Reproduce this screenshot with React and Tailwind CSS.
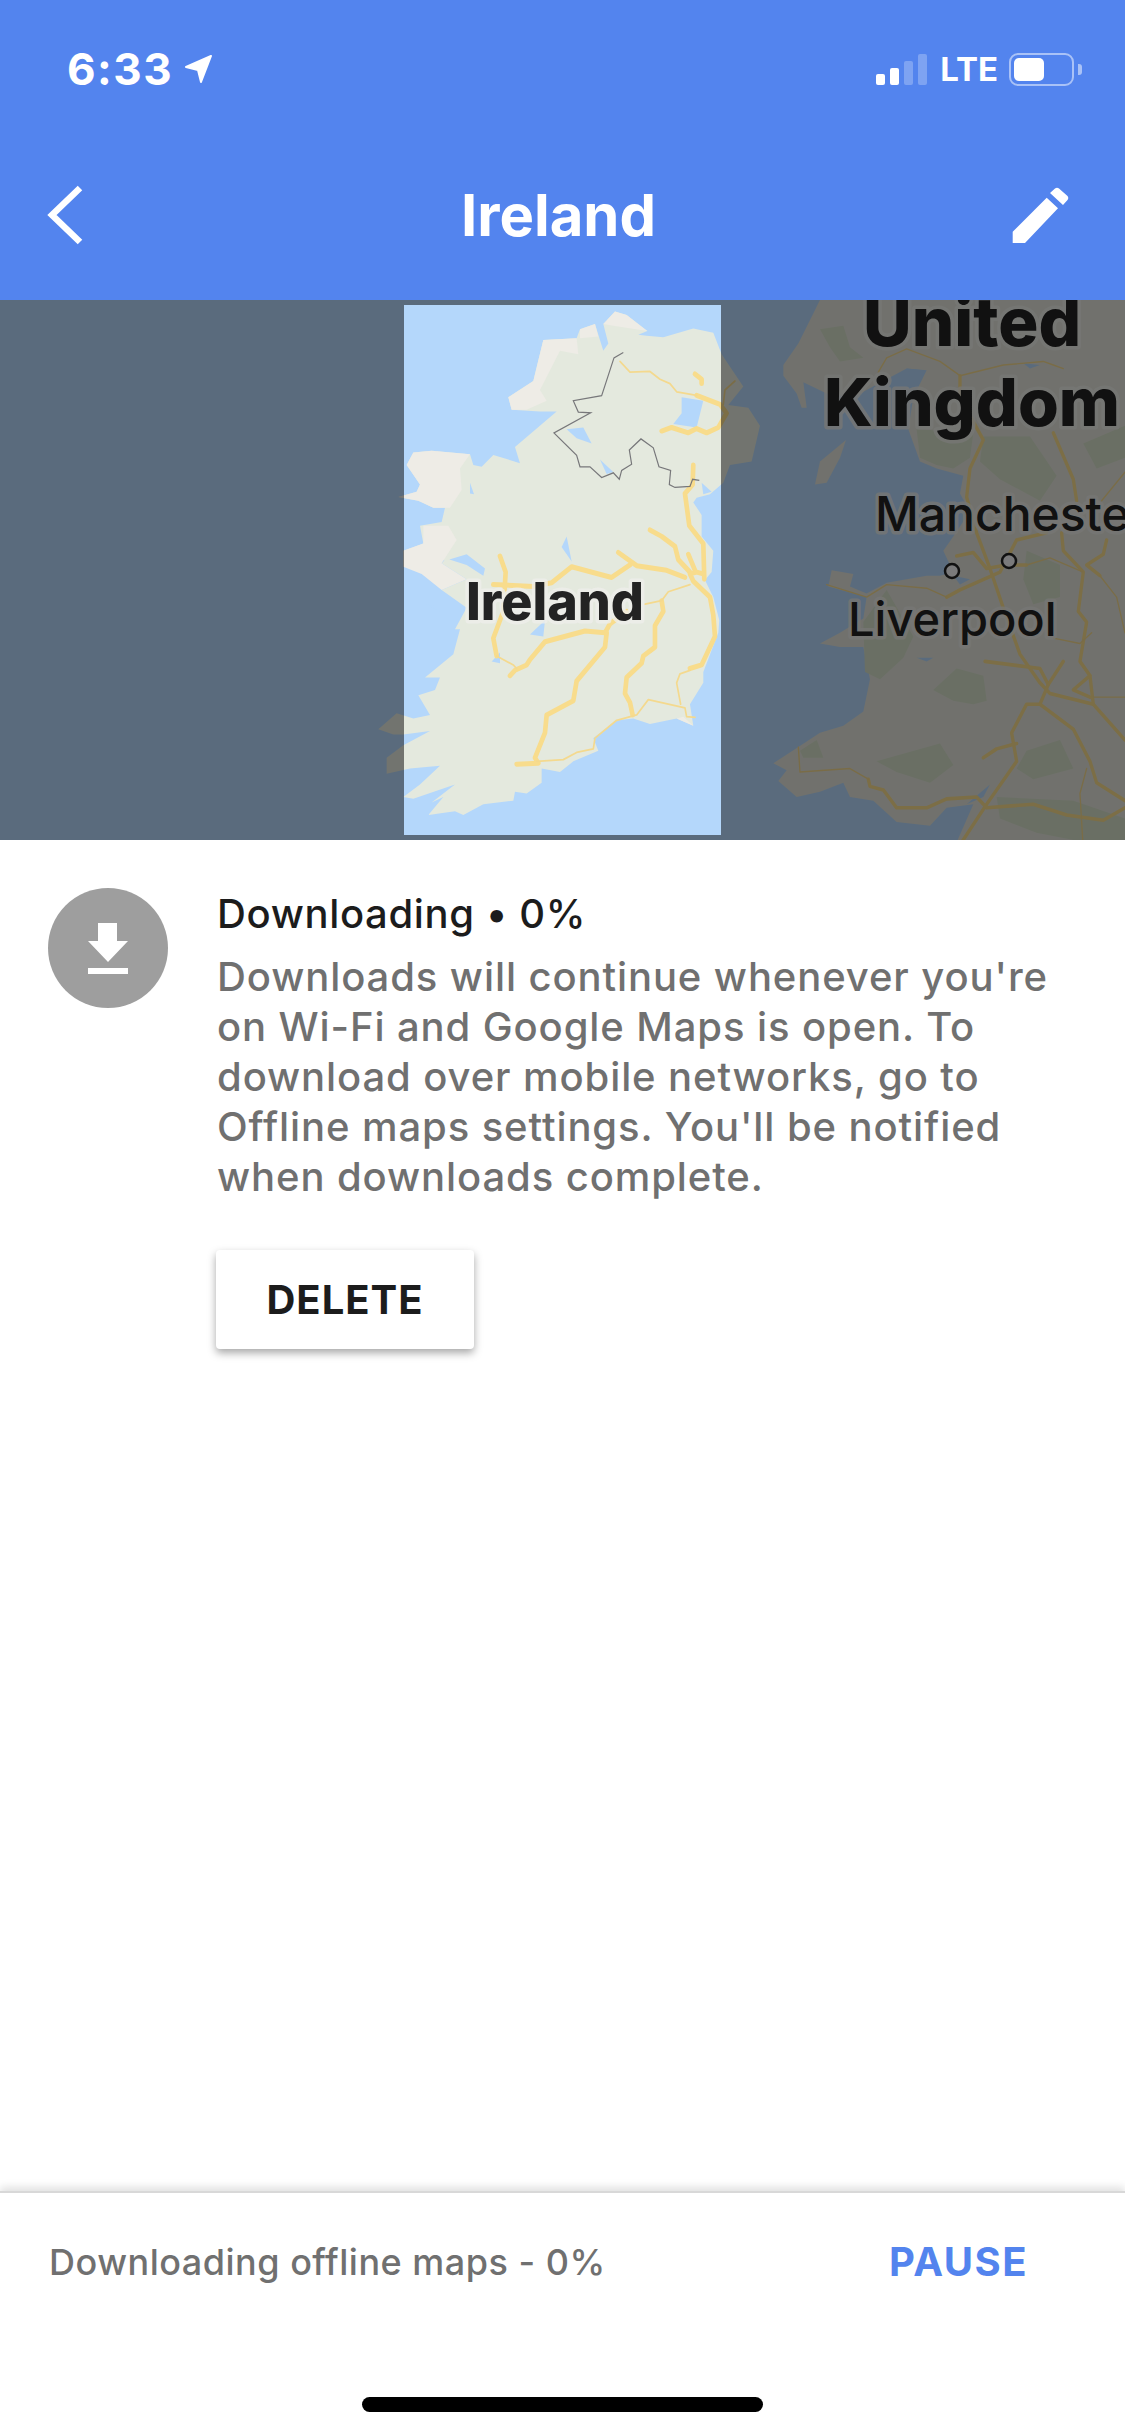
import React from "react";

// traced from crops: both groups use crop coords, hence the odd scale
const IRELAND_LAND = "765,60 800,70 862,115 835,125 860,128 850,170 800,180 860,128 910,132 1000,108 1060,120 1085,180 1150,270 1105,322 1165,330 1200,380 1175,480 1110,490 1090,540 1050,572 1010,582 1000,595 1025,630 1025,690 1060,730 1055,790 1035,812 1060,860 1078,925 1075,960 1030,1070 1030,1100 990,1160 1000,1220 950,1200 870,1215 820,1200 770,1205 700,1255 715,1290 640,1320 600,1350 545,1340 545,1380 500,1410 465,1405 460,1430 370,1440 310,1470 285,1460 205,1470 250,1420 215,1435 285,1385 160,1425 130,1420 180,1385 240,1332 150,1340 80,1355 80,1310 130,1275 210,1235 130,1245 100,1245 55,1230 110,1185 160,1200 210,1190 175,1135 225,1120 240,1085 195,1085 280,1020 300,950 285,950 320,890 245,840 320,810 245,765 280,730 315,690 315,730 265,755 130,775 130,730 190,710 180,660 245,650 255,610 220,610 175,590 115,580 170,565 180,545 140,490 160,455 215,450 330,460 340,490 365,495 400,462 480,485 465,440 590,340 540,340 455,335 445,300 520,255 550,140 650,135 660,110 705,95 730,170 700,210 745,150 730,95";
const IRELAND_BEIGE = [
  "550,140 650,135 655,180 600,170 540,280 560,310 500,335 455,335 445,300 520,255",
  "140,490 160,455 215,450 330,460 300,500 305,560 270,610 220,610 175,590 115,580 170,565 180,545",
  "130,730 190,710 190,660 265,660 290,700 245,765 320,810 245,840 185,795 130,775",
  "730,95 765,60 800,70 862,115 760,100",
  "660,110 705,95 715,130 660,135",
  "950,1200 1000,1220 970,1195",
];
const IRELAND_WATER = [
  "965,300 1030,310 1010,385 940,375 965,345",
  "620,390 670,385 695,430 650,415",
  "720,475 760,510 740,515",
  "620,690 635,760 605,720",
  "510,965 555,925 550,970",
  "330,540 342,572 330,570",
  "268,755 320,740 375,780 370,800 320,770",
  "200,880 240,890 240,900",
  "395,1040 420,1015 420,1045",
  "1025,540 1055,565 1030,572",
];
const IRELAND_ROADS = [
  "1000,490 998,545 975,570 988,660 1030,710 1033,810",
  "975,805 920,785 830,772 775,735",
  "810,770 755,805 635,775 575,820 520,830 400,825",
  "870,672 905,690 945,718 955,755 990,790",
  "985,740 1005,785",
  "905,870 910,900 885,940 885,1000 850,1025 845,1045 800,1085 795,1130 810,1155 818,1190",
  "800,900 750,935 735,960 675,955 555,985 510,1035 500,1050 465,1065 450,1080",
  "740,960 735,1000 650,1095 640,1150 560,1190 555,1240 525,1310 535,1325 470,1328",
  "990,1060 1025,1050 1065,970 1060,910 1050,860 1000,815 990,795 1010,790 1030,795",
  "420,745 437,790 430,900 400,975 410,1025",
  "1010,295 1080,320 1100,345 1075,385 1040,400 1010,388 985,400 935,385 905,395",
  "1005,235 1025,250 1025,262",
];
const IRELAND_THIN = [
  "530,1320 610,1315 650,1295 700,1285 705,1255 770,1205 830,1190 865,1147 975,1170 980,1195 1005,1197",
  "990,825 925,845 905,870 855,880",
  "410,1025 460,1050 470,1060",
  "990,1065 960,1075 950,1100 962,1160",
  "780,200 810,230 870,228 900,250 930,262 950,285 1010,295",
  "1090,320 1095,280 1125,255",
];
const BORDER = "790,175 762,190 725,296 640,310 655,342 692,344 582,400 650,463 660,495 690,495 725,525 760,512 778,530 785,505 815,488 808,448 843,417 880,442 897,495 932,505 928,545 945,553 990,550 998,530 1018,533";

const UK_LAND = [
  "240,28 175,150 130,210 130,240 170,290 185,330 200,330 190,258 260,290 340,300 420,260 500,220 560,225 520,300 505,390 540,480 590,500 670,520 660,570 690,620 640,690 610,730 640,790 600,800 560,800 440,820 380,850 330,830 340,795 275,785 265,830 380,860 370,920 300,960 240,990 300,1000 370,1000 390,1090 370,1180 310,1220 240,1240 175,1280 100,1325 140,1345 115,1375 170,1420 240,1405 310,1380 330,1420 400,1430 470,1490 570,1500 620,1450 700,1440 640,1568 1155,1568 1155,28",
  "318,420 300,470 260,540 225,545 240,480",
];
const UK_GREEN = [
  "240,110 310,100 330,160 370,190 300,200 270,160",
  "530,390 700,400 690,470 640,500 590,490 540,470",
  "730,410 870,410 950,520 900,590 780,530 720,480",
  "1030,430 1155,380 1155,470 1070,500",
  "860,730 960,770 960,860 880,880 850,810",
  "370,930 440,840 520,970 490,1030 420,1090 375,1070",
  "580,1120 650,1060 730,1080 740,1150 700,1160 640,1150",
  "410,1320 600,1270 640,1330 570,1380 470,1350",
  "860,1290 960,1260 1000,1340 880,1370 830,1340",
  "770,1420 1000,1430 1155,1480 1155,1568 890,1520 780,1480",
  "180,1290 230,1260 250,1310 190,1310",
];
const UK_ROADS = [
  "660,240 660,300 730,420 690,500 680,580 710,680 750,780 790,890 840,1020 900,1100 930,1130 1060,1160 1155,1260",
  "940,400 1000,530 1010,590",
  "965,680 970,730 1030,790 1015,900 1040,930 1020,1040 1050,1080 1060,1160",
  "1100,700 1090,740 1040,770 1080,800",
  "650,745 700,735 740,780 800,770 860,770",
  "620,860 660,840 780,790 830,700 920,680",
  "735,1040 900,1060 925,1105 970,1040",
  "925,1105 900,1160 860,1160 815,1240 830,1320 740,1440 650,1568",
  "730,1310 770,1285 830,1270",
  "385,1370 390,1390 430,1400 470,1450 560,1450 620,1425 710,1420 740,1450 880,1440 980,1470 1090,1485 1155,1450",
  "1050,1080 1000,1120 1050,1140",
  "900,1160 1000,1230 1050,1320 1070,1380 1155,1430",
];
const UK_THIN = [
  "415,230 440,190 500,165 600,200 660,240 790,210 910,200 940,210 970,220",
  "260,825 380,860 440,825 560,835 620,860",
  "175,1280 180,1350 330,1340 385,1370",
  "860,770 930,750 1030,790",
  "940,975 1020,990 1055,960",
  "1060,1140 1155,1140",
  "1080,800 1130,860 1155,960",
  "1040,1340 1020,1410 1030,1568",
  "1085,590 1155,510",
];
const UK_WATER = ["500,220 550,225 520,260", "530,1030 580,1030 560,1040", "640,800 690,810 660,825", "850,205 900,210 870,220", "680,1440 750,1385 730,1420"];

const ROAD = "#f8dc8c";
const THIN = "#f4d98e";

function Lines({ items, width, color }) {
  return items.map((pts) => (
    <polyline
      key={pts}
      points={pts}
      fill="none"
      stroke={color}
      strokeWidth={width}
      strokeLinejoin="round"
      strokeLinecap="round"
    />
  ));
}

function Polys({ items, color }) {
  return items.map((pts) => <polygon key={pts} points={pts} fill={color} />);
}

function Label({ x, y, size, weight = 800, children }) {
  return (
    <text
      x={x}
      y={y}
      fontSize={size}
      fontWeight={weight}
      fontFamily="Inter, sans-serif"
      fill="#232323"
      stroke="#eeeeea"
      strokeOpacity="0.8"
      strokeWidth="7"
      paintOrder="stroke"
      strokeLinejoin="round"
    >
      {children}
    </text>
  );
}

function MapView() {
  return (
    <svg viewBox="0 0 1125 540" className="block w-[1125px] h-[540px] shrink-0 bg-[#b4d7fb]">
      <g transform="translate(740 -10) scale(0.3333 0.3571)">
        <Polys items={UK_LAND} color="#e2e3da" />
        <Polys items={UK_GREEN} color="#d4dfc8" />
        <Polys items={UK_WATER} color="#b4d7fb" />
        <Lines items={UK_ROADS} width={10} color={ROAD} />
        <Lines items={UK_THIN} width={4} color={THIN} />
      </g>
      <g transform="translate(360 -10) scale(0.3333 0.3571)">
        <polygon points={IRELAND_LAND} fill="#e4e9de" />
        <Polys items={IRELAND_BEIGE} color="#eeece6" />
        <Polys items={IRELAND_WATER} color="#b4d7fb" />
        <Lines items={IRELAND_ROADS} width={14} color={ROAD} />
        <Lines items={IRELAND_THIN} width={5} color={THIN} />
        <polyline points={BORDER} fill="none" stroke="#77777a" strokeWidth="3.5" />
      </g>
      <circle cx="952" cy="271" r="7" fill="#f4f4f6" stroke="#222222" strokeWidth="2.5" />
      <circle cx="1009" cy="261" r="7" fill="#f4f4f6" stroke="#222222" strokeWidth="2.5" />
      <Label x="863" y="46" size="67">United</Label>
      <Label x="824" y="126" size="66">Kingdom</Label>
      <Label x="875" y="231" size="48" weight={500}>Manchester</Label>
      <Label x="848" y="336" size="47" weight={500}>Liverpool</Label>
      <Label x="466" y="320" size="52">Ireland</Label>
      {/* dimmed surround, the selected area stays lit */}
      <path d="M0 0H1125V540H0Z M404 5V535H721V5Z" fillRule="evenodd" fill="#000000" fillOpacity="0.5" />
    </svg>
  );
}

function StatusBar() {
  return (
    <div className="mt-[52px] h-[34px] flex items-center justify-between pl-[67px] pr-[43px] text-white">
      <div className="flex items-center gap-[11px]">
        <span className="text-[44px] leading-[34px] font-bold tracking-[1.5px]">6:33</span>
        <svg width="30" height="30" viewBox="0 0 30 30">
          <path d="M27 2 L2 13 L14 16 L17 28 Z" fill="#fff" stroke="#fff" strokeWidth="2" strokeLinejoin="round" />
        </svg>
      </div>
      <div className="flex items-center">
        <div className="flex items-end gap-[5px] h-[31px]">
          <span className="w-[9px] h-[11px] rounded-[2px] bg-white" />
          <span className="w-[9px] h-[17px] rounded-[2px] bg-white" />
          <span className="w-[9px] h-[24px] rounded-[2px] bg-white/25" />
          <span className="w-[9px] h-[31px] rounded-[2px] bg-white/25" />
        </div>
        <span className="ml-[13px] text-[33px] leading-[34px] font-bold">LTE</span>
        <div className="ml-[11px] flex items-center">
          <div className="w-[65px] h-[33px] rounded-[9px] border-[2px] border-white/50 p-[3px]">
            <div className="w-[30px] h-full rounded-[5px] bg-white" />
          </div>
          <span className="ml-[4px] w-[4px] h-[11px] rounded-r-[3px] bg-white/50" />
        </div>
      </div>
    </div>
  );
}

export default function App() {
  return (
    <div className="w-[1125px] h-[2436px] flex flex-col bg-white overflow-hidden [font-family:Inter,sans-serif]">
      <header className="h-[300px] shrink-0 bg-[#5384ee]">
        <StatusBar />
        <div className="mt-[99px] h-[60px] grid grid-cols-[1fr_auto_1fr] items-center pl-[47px] pr-[55px] text-white">
          <svg width="36" height="60" viewBox="0 0 36 60" className="block">
            <path d="M33 3 L5 30 L33 57" fill="none" stroke="#fff" strokeWidth="6.500" />
          </svg>
          <h1 className="text-[58px] leading-[60px] font-bold">Ireland</h1>
          <svg width="60" height="60" viewBox="10 10 60 60" className="block justify-self-end">
            <path
              d="M12.700 68 V56.700 L46.700 22.700 L58 33.300 L25 68 Z M50 18 L55 13.500 Q57 12 59 13.500 L67.500 21 Q69 23 67.500 25 L63 30 Z"
              fill="#fff"
            />
          </svg>
        </div>
      </header>

      <MapView />

      <main className="flex-1 flex pl-[48px] pt-[48px]">
        <div className="w-[120px] h-[120px] rounded-full bg-[#9e9e9e] shrink-0 flex items-center justify-center">
          <svg width="42" height="51" viewBox="0 0 42 51">
            <path d="M11 0H30V18H41L21 39 1 18H11Z M1 45H41V51H1Z" fill="#fff" />
          </svg>
        </div>
        <div className="ml-[49px] pt-px">
          <p className="text-[40px] leading-[50px] font-medium tracking-[0.65px] text-[#1c1c1c]">Downloading • 0%</p>
          <p className="mt-[13px] w-[880px] text-[40px] leading-[50px] font-medium tracking-[0.9px] text-[#707070]">
            Downloads will continue whenever you're
            <br />
            on Wi-Fi and Google Maps is open. To
            <br />
            download over mobile networks, go to
            <br />
            Offline maps settings. You'll be notified
            <br />
            when downloads complete.
          </p>
          <button className="mt-[48px] -ml-px w-[258px] h-[99px] rounded-[4px] bg-white text-[40px] font-bold tracking-[1px] text-[#1c1c1c] shadow-[0_4px_8px_rgba(0,0,0,0.35)]">
            DELETE
          </button>
        </div>
      </main>

      <footer className="h-[245px] shrink-0 flex flex-col border-t-2 border-[#d8d8d8] shadow-[0_-4px_8px_rgba(0,0,0,0.12)]">
        <div className="mt-[44px] h-[50px] flex items-center justify-between pl-[49px] pr-[97px]">
          <span className="text-[36px] leading-[50px] font-medium tracking-[0.5px] text-[#707070]">Downloading offline maps - 0%</span>
          <span className="text-[40px] leading-[50px] font-bold tracking-[1.5px] text-[#5384ee]">PAUSE</span>
        </div>
        <div className="mt-[110px] self-center w-[401px] h-[15px] rounded-[8px] bg-black" />
      </footer>
    </div>
  );
}
